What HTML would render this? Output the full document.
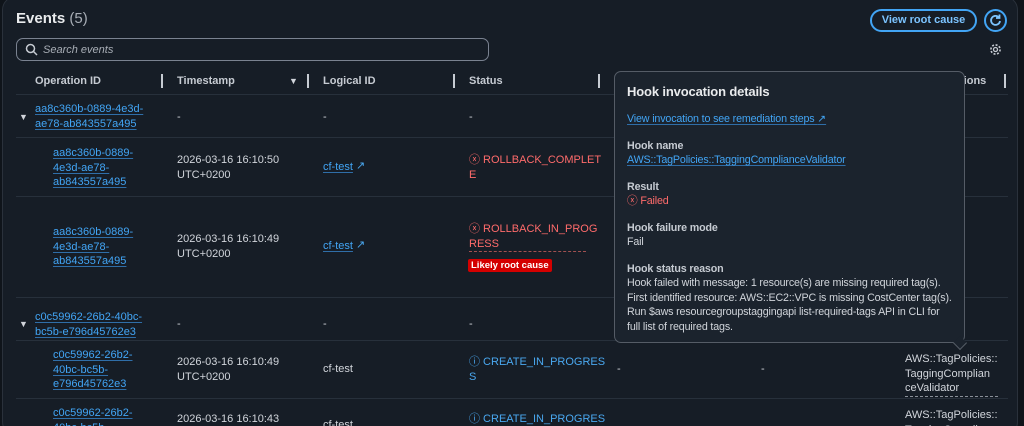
<!DOCTYPE html><html><head><style>
*{margin:0;padding:0;box-sizing:border-box}
html,body{width:1024px;height:426px;overflow:hidden}
body{background:#0f141a;font-family:"Liberation Sans",sans-serif;font-size:11px;color:#d1d5db;position:relative}
.panel{position:absolute;left:2px;top:-4px;width:1016px;height:440px;background:#161d26;border:1px solid #2a313b;border-radius:14px}
.a{position:absolute;line-height:14.5px;white-space:nowrap}
.l{color:#42a5f5;text-decoration:underline;text-decoration-color:#2f6ea8;text-underline-offset:2px}
.r{color:#ff6b6b}
.b{color:#4aa8f0}
.h{font-weight:bold;color:#c6cbd2}
.line{position:absolute;left:16px;right:16px;height:1px;background:#27303b}
.sep{position:absolute;top:74px;width:2px;height:14px;background:#c6cbd2}
.pop{position:absolute;left:614px;top:71px;width:351px;height:272px;background:#1b232d;border:1px solid #555c66;border-radius:7px}
.pop .a{color:#d1d5db;font-size:10.7px;letter-spacing:-0.15px}
</style></head><body>
<div class="panel"></div>
<div class="a" style="left:16px;top:12px;font-size:15px;font-weight:bold;color:#e9ebed">Events <span style="font-weight:normal;color:#a8aeb6">(5)</span></div>
<div style="position:absolute;left:870px;top:9px;width:107px;height:23px;border:2px solid #42a5f5;border-radius:12px;color:#7cc4ff;font-weight:bold;font-size:11px;text-align:center;line-height:19px">View root cause</div>
<div style="position:absolute;left:984px;top:9px;width:23px;height:23px;border:2px solid #42a5f5;border-radius:50%"><svg width="19" height="19" viewBox="0 0 19 19"><path d="M13 6.5A4.5 4.5 0 1 0 14 10" fill="none" stroke="#7cc4ff" stroke-width="1.8"/><path d="M13.5 3.5v3.5h-3.5" fill="none" stroke="#7cc4ff" stroke-width="1.8"/></svg></div>
<div style="position:absolute;left:16px;top:38px;width:473px;height:23px;border:1px solid #7a8290;border-radius:7px"></div>
<svg style="position:absolute;left:25px;top:43px" width="13" height="13" viewBox="0 0 13 13"><circle cx="5.5" cy="5.5" r="4" fill="none" stroke="#c6cbd2" stroke-width="1.5"/><path d="M8.5 8.5L12 12" stroke="#c6cbd2" stroke-width="1.5"/></svg>
<div class="a" style="left:43px;top:43px;font-style:italic;color:#a8aeb6">Search events</div>
<svg style="position:absolute;left:989px;top:43px" width="13" height="13" viewBox="0 0 13 13"><circle cx="6.5" cy="6.5" r="4.6" fill="none" stroke="#c6cbd2" stroke-width="1.6" stroke-dasharray="2 1.6"/><circle cx="6.5" cy="6.5" r="2" fill="none" stroke="#c6cbd2" stroke-width="1.3"/></svg>
<div class="a h" style="left:35px;top:74px">Operation ID</div>
<div class="sep" style="left:161px"></div>
<div class="a h" style="left:177px;top:74px">Timestamp</div>
<div class="a" style="left:289px;top:74px;font-size:9px">▼</div>
<div class="sep" style="left:307px"></div>
<div class="a h" style="left:323px;top:74px">Logical ID</div>
<div class="sep" style="left:453px"></div>
<div class="a h" style="left:469px;top:74px">Status</div>
<div class="sep" style="left:598px"></div>
<div class="a h" style="left:960px;top:74px">tions</div>
<div class="sep" style="left:1004px"></div>
<div class="line" style="top:94px"></div>
<div class="line" style="top:137px"></div>
<div class="line" style="top:196px"></div>
<div class="line" style="top:297px"></div>
<div class="line" style="top:340px"></div>
<div class="line" style="top:398px"></div>

<div class="a" style="left:19px;top:110px;font-size:9px">▼</div>
<div class="a l" style="left:35px;top:102px">aa8c360b-0889-4e3d-<br>ae78-ab843557a495</div>
<div class="a" style="left:177px;top:110px">-</div><div class="a" style="left:323px;top:110px">-</div><div class="a" style="left:469px;top:110px">-</div>

<div class="a l" style="left:53px;top:146px">aa8c360b-0889-<br>4e3d-ae78-<br>ab843557a495</div>
<div class="a" style="left:177px;top:153px">2026-03-16 16:10:50<br>UTC+0200</div>
<div class="a l" style="left:323px;top:160px">cf-test</div><div class="a b" style="left:356px;top:159px">↗</div>
<div class="a r" style="left:469px;top:153px">ⓧ ROLLBACK_COMPLET<br>E</div>

<div class="a l" style="left:53px;top:225px">aa8c360b-0889-<br>4e3d-ae78-<br>ab843557a495</div>
<div class="a" style="left:177px;top:232px">2026-03-16 16:10:49<br>UTC+0200</div>
<div class="a l" style="left:323px;top:239px">cf-test</div><div class="a b" style="left:356px;top:238px">↗</div>
<div class="a r" style="left:469px;top:222px">ⓧ ROLLBACK_IN_PROG<br>RESS</div>
<div style="position:absolute;left:469px;top:251px;width:117px;border-top:1px dashed #a05050"></div>
<div class="a" style="left:468px;top:259px;background:#d40000;color:#fff;font-size:9.5px;padding:0 3px;border-radius:2px;line-height:13px;font-weight:bold">Likely root cause</div>

<div class="a" style="left:19px;top:317px;font-size:9px">▼</div>
<div class="a l" style="left:35px;top:310px">c0c59962-26b2-40bc-<br>bc5b-e796d45762e3</div>
<div class="a" style="left:177px;top:317px">-</div><div class="a" style="left:323px;top:317px">-</div><div class="a" style="left:469px;top:317px">-</div>

<div class="a l" style="left:53px;top:348px">c0c59962-26b2-<br>40bc-bc5b-<br>e796d45762e3</div>
<div class="a" style="left:177px;top:355px">2026-03-16 16:10:49<br>UTC+0200</div>
<div class="a" style="left:323px;top:362px">cf-test</div>
<div class="a b" style="left:469px;top:355px">ⓘ CREATE_IN_PROGRES<br>S</div>
<div class="a" style="left:617px;top:362px">-</div><div class="a" style="left:761px;top:362px">-</div>
<div class="a" style="left:905px;top:352px;border-bottom:1px dashed #8a9099">AWS::TagPolicies::<br>TaggingComplian<br>ceValidator</div>

<div class="a l" style="left:53px;top:406px">c0c59962-26b2-<br>40bc-bc5b-</div>
<div class="a" style="left:177px;top:412px">2026-03-16 16:10:43</div>
<div class="a" style="left:323px;top:418px">cf-test</div>
<div class="a b" style="left:469px;top:412px">ⓘ CREATE_IN_PROGRES</div>
<div class="a" style="left:905px;top:408px">AWS::TagPolicies::<br>TaggingComplian</div>

<div class="pop">
<div style="position:absolute;left:340px;bottom:-6px;width:10px;height:10px;background:#1b232d;border-right:1px solid #555c66;border-bottom:1px solid #555c66;transform:rotate(45deg)"></div>
<div class="a" style="left:12px;top:13px;font-size:13px!important;font-weight:bold;color:#e9ebed">Hook invocation details</div>
<div class="a l" style="left:12px;top:40px;color:#42a5f5">View invocation to see remediation steps <span style="text-decoration:none">↗</span></div>
<div class="a h" style="left:12px;top:67px;color:#c6cbd2">Hook name</div>
<div class="a l" style="left:12px;top:81px;color:#42a5f5">AWS::TagPolicies::TaggingComplianceValidator</div>
<div class="a h" style="left:12px;top:108px;color:#c6cbd2">Result</div>
<div class="a r" style="left:12px;top:122px;color:#ff6b6b">ⓧ Failed</div>
<div class="a h" style="left:12px;top:149px;color:#c6cbd2">Hook failure mode</div>
<div class="a" style="left:12px;top:163px">Fail</div>
<div class="a h" style="left:12px;top:190px;color:#c6cbd2">Hook status reason</div>
<div class="a" style="left:12px;top:204px">Hook failed with message: 1 resource(s) are missing required tag(s).<br>First identified resource: AWS::EC2::VPC is missing CostCenter tag(s).<br>Run $aws resourcegroupstaggingapi list-required-tags API in CLI for<br>full list of required tags.</div>
</div>
</body></html>
